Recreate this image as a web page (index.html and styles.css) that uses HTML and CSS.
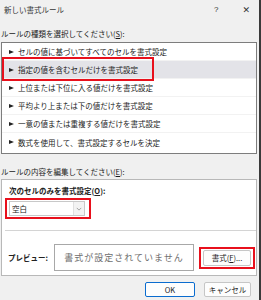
FILE: index.html
```html
<!DOCTYPE html>
<html lang="ja">
<head>
<meta charset="utf-8">
<link rel="stylesheet" href="styles.css">
</head>
<body>
<div class="win">
  <div class="titlebar">
    <span class="title">新しい書式ルール</span>
    <span class="help">?</span>
    <span class="close">✕</span>
  </div>
  <div class="sec-label first">ルールの種類を選択してください(<u>S</u>):</div>
  <div class="listbox">
    <div class="row"><svg class="arrow" viewBox="0 0 5 4"><polygon points="0,0 5,2 0,4"/></svg>セルの値に基づいてすべてのセルを書式設定</div>
    <div class="row selected"><svg class="arrow" viewBox="0 0 5 4"><polygon points="0,0 5,2 0,4"/></svg>指定の値を含むセルだけを書式設定<span class="mark"></span></div>
    <div class="row"><svg class="arrow" viewBox="0 0 5 4"><polygon points="0,0 5,2 0,4"/></svg>上位または下位に入る値だけを書式設定</div>
    <div class="row"><svg class="arrow" viewBox="0 0 5 4"><polygon points="0,0 5,2 0,4"/></svg>平均より上または下の値だけを書式設定</div>
    <div class="row"><svg class="arrow" viewBox="0 0 5 4"><polygon points="0,0 5,2 0,4"/></svg>一意の値または重複する値だけを書式設定</div>
    <div class="row"><svg class="arrow" viewBox="0 0 5 4"><polygon points="0,0 5,2 0,4"/></svg>数式を使用して、書式設定するセルを決定</div>
  </div>
  <div class="sec-label second">ルールの内容を編集してください(<u>E</u>):</div>
  <div class="editbox">
    <div class="bold cond">次のセルのみを書式設定(<u>O</u>):</div>
    <div class="hl dropwrap">
      <div class="dropdown">
        <span class="dd-text">空白</span>
        <span class="chev"><svg viewBox="0 0 8 5"><polyline points="1,1 4,4 7,1"/></svg></span>
      </div>
    </div>
    <div class="sep"></div>
    <div class="preview-row">
      <span class="bold pv-label">プレビュー:</span>
      <div class="preview">書式が設定されていません</div>
      <div class="hl btnwrap"><div class="btn fmt">書式(<u>F</u>)...</div></div>
    </div>
  </div>
  <div class="actions">
    <div class="btn ok">OK</div>
    <div class="btn cancel">キャンセル</div>
  </div>
</div>
</body>
</html>
```

FILE: styles.css
```css
* { box-sizing: border-box; }
body {
  margin: 0;
  width: 261px;
  height: 300px;
  overflow: hidden;
  font-family: "Noto Sans CJK JP", "Noto Sans", sans-serif;
  font-size: 7.5px;
  color: #1a1a1a;
  background: #f0f0f0;
}
u { text-decoration: underline; text-underline-offset: 1px; }
.win {
  width: 261px;
  height: 300px;
  border-right: 2px solid #3a3a3a;
  display: flex;
  flex-direction: column;
  background: #f0f0f0;
}
.titlebar {
  height: 20px;
  display: flex;
  align-items: center;
  padding-left: 4px;
  line-height: 10px;
  color: #333;
}
.help { margin-left: auto; font-size: 8px; font-family: "Liberation Sans", sans-serif; }
.close { margin-left: 24px; margin-right: 9px; font-size: 9px; font-family: "DejaVu Sans", sans-serif; color: #333; }
.sec-label {
  line-height: 10px;
  padding-left: 1px;
}
.sec-label.first { padding-top: 9px; padding-bottom: 3px; }
.sec-label.second { padding-top: 13px; padding-bottom: 2px; }
.listbox {
  margin: 0 2px 0 1px;
  border: 1px solid #7d7d7d;
  background: #fff;
  padding-bottom: 2px;
}
.row {
  position: relative;
  height: 18px;
  display: flex;
  align-items: center;
  padding-left: 7px;
  border-bottom: 1px solid #f2f2f2;
  color: #222;
}
.row:last-child { border-bottom: none; }
.row.selected { background: #e3e3e8; }
.arrow { width: 5px; height: 4px; margin-right: 4px; fill: #222; }
.mark {
  position: absolute;
  left: 0;
  top: -4px;
  width: 152px;
  height: 24px;
  border: 2px solid #e8101c;
}
.editbox {
  margin: 0 2px 0 1px;
  border: 1px solid #b8b8b8;
  background: #fff;
  padding: 6px 0 4px 0;
}
.bold { font-weight: bold; color: #222; }
.cond { line-height: 10px; padding-left: 7px; }
.hl { border: 2px solid #e8101c; }
.dropwrap {
  margin: 2px 0 0 3px;
  width: 86px;
  padding: 1px 4px 1px 2px;
}
.dropdown {
  height: 15px;
  border: 1px solid #c8c8c8;
  display: flex;
  align-items: center;
  padding-left: 2px;
}
.dd-text { flex: 1; color: #222; }
.chev {
  width: 11px;
  height: 13px;
  margin-right: 0;
  background: #f3f3f3;
  border-left: 1px solid #e0e0e0;
  display: flex;
  align-items: center;
  justify-content: center;
}
.chev svg { width: 6px; height: 4px; fill: none; stroke: #888; stroke-width: 1; }
.sep {
  margin: 11px 0 0 3px;
  height: 1px;
  background: #d4d4d4;
}
.preview-row {
  margin-top: 13px;
  display: flex;
  align-items: center;
  padding-left: 6px;
}
.pv-label { width: 46px; }
.preview {
  width: 140px;
  height: 27px;
  border: 1px solid #a8a8a8;
  display: flex;
  align-items: center;
  justify-content: center;
  font-size: 9px;
  letter-spacing: 1px;
  color: #6e6e6e;
}
.btnwrap {
  margin-left: 5px;
  width: 56px;
  height: 22px;
  padding: 1px 2px;
}
.btn {
  display: flex;
  align-items: center;
  justify-content: center;
  background: #fdfdfd;
  border: 1px solid #c6c6c6;
  border-radius: 2px;
  color: #222;
}
.fmt { height: 16px; }
.actions {
  margin-top: 6px;
  display: flex;
  justify-content: flex-end;
  gap: 9px;
  padding-right: 8px;
}
.actions .btn { height: 15px; }
.ok { width: 50px; border: 1px solid #0a6ccf; }
.cancel { width: 47px; }
```
